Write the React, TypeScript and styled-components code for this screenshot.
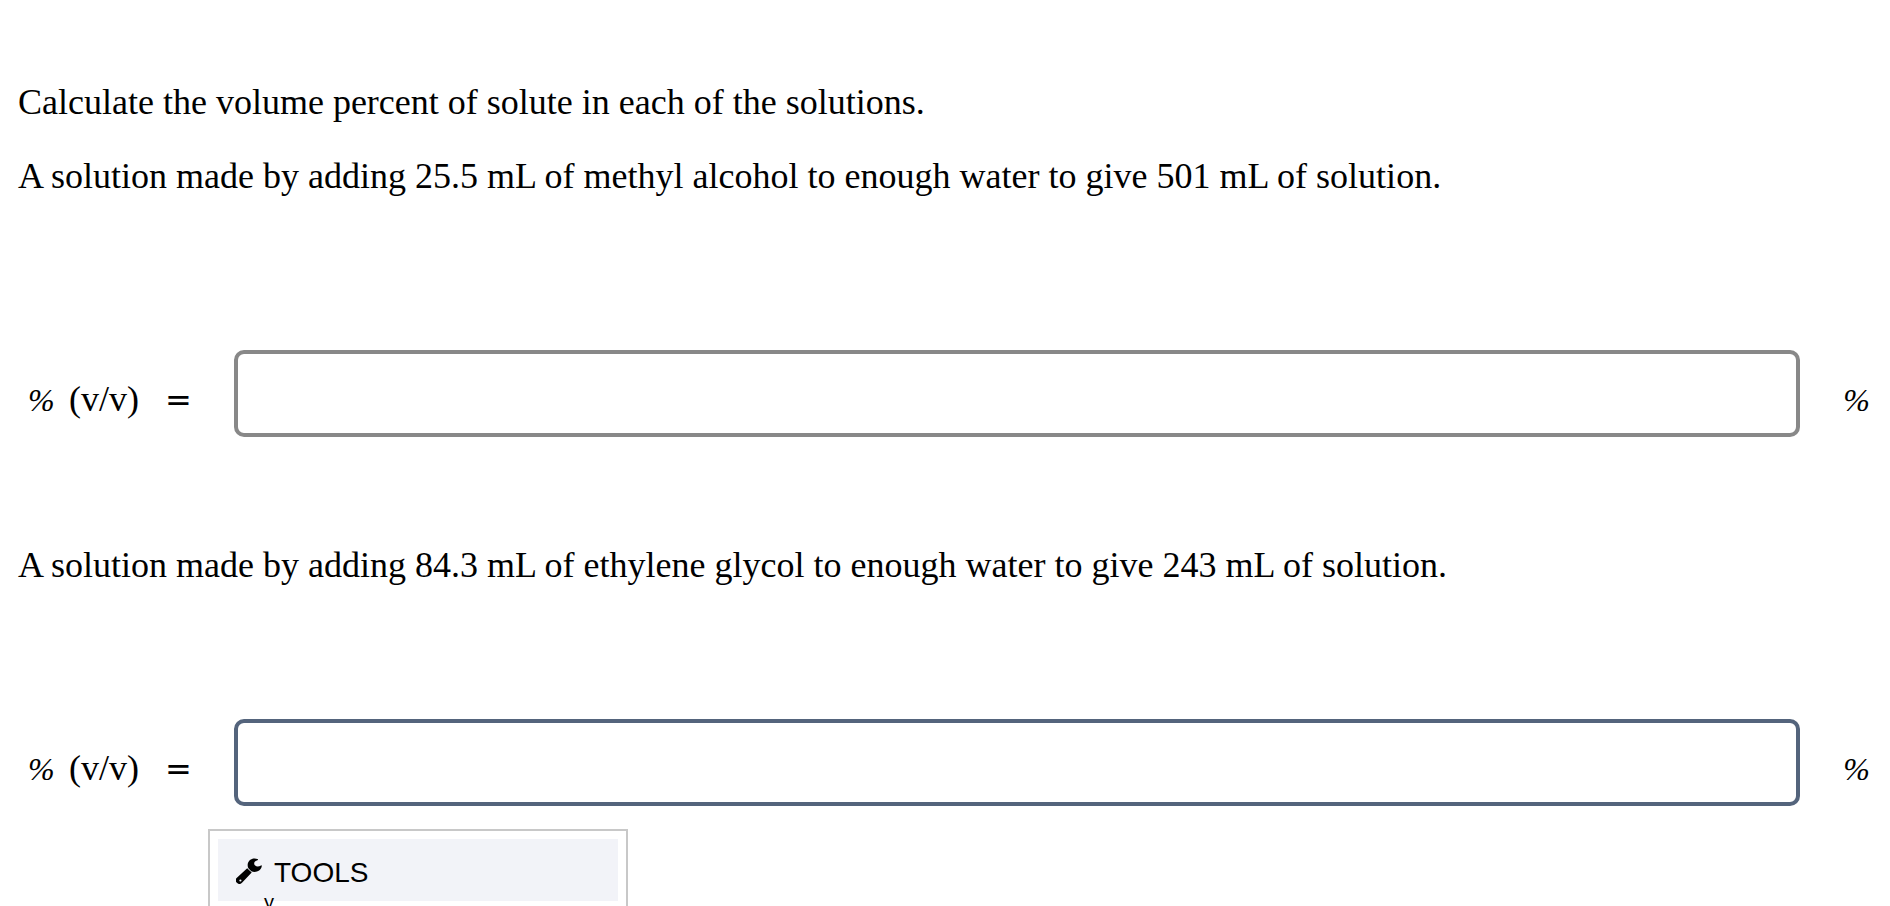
import React from "react";
import styled, { createGlobalStyle } from "styled-components";

const GlobalStyle = createGlobalStyle`
  *, *::before, *::after { box-sizing: border-box; }
  body { margin: 0; background: #fff; color: #000; }
`;

const Page = styled.main`
  height: 100vh;
  overflow: hidden;
  padding: 80px 18px 0;
  font-family: "Liberation Serif", "Times New Roman", serif;
  font-size: 36px;
  line-height: 44px;
`;

const Paragraph = styled.p`
  margin: 0 0 30px;
`;

const AnswerRow = styled.div<{ $gap: number }>`
  display: flex;
  align-items: center;
  margin: ${(p) => p.$gap}px 0 0;
  padding: 0 2px 0 10px;
`;

const AnswerLabel = styled.label`
  display: flex;
  flex: none;
  align-items: baseline;
  width: 206px;
  padding-top: 12px;
`;

const Percent = styled.span`
  width: 41px;
  font-size: 32px;
  font-style: italic;
`;

const Equals = styled.span`
  margin-left: 26px;
  font-family: "DejaVu Sans", sans-serif;
  font-size: 32px;
`;

const AnswerInput = styled.input<{ $active?: boolean }>`
  flex: 1;
  min-width: 0;
  height: 87px;
  padding: 0 20px;
  border: 4px solid ${(p) => (p.$active ? "#54647c" : "#888")};
  border-radius: 10px;
  background: #fff;
  font: inherit;
  outline: none;
`;

const Unit = styled.span`
  flex: none;
  width: 70px;
  padding-top: 12px;
  font-size: 32px;
  font-style: italic;
  text-align: right;
`;

const Prompt = styled.p`
  margin: 106px 0 0;
`;

const ToolsPanel = styled.section`
  width: 420px;
  height: 240px;
  margin: 23px 0 0 190px;
  padding: 8px;
  border: 2px solid #c8c8c8;
  background: #fff;
  font-family: "Liberation Sans", Arial, sans-serif;
`;

const ToolsButton = styled.button`
  display: flex;
  align-items: center;
  gap: 12px;
  width: 100%;
  height: 62px;
  padding: 6px 18px 0;
  border: 0;
  background: #f2f3f8;
  color: #000;
  font: inherit;
  font-size: 28px;
  line-height: 32px;

  svg {
    margin-bottom: 4px;
  }
`;

const SuperscriptButton = styled.button`
  display: block;
  margin: -11px 0 0 46px;
  padding: 0;
  border: 0;
  background: none;
  color: #000;
  font: inherit;
  font-size: 20px;
  line-height: 24px;
`;

function WrenchIcon() {
  return (
    <svg width="26" height="26" viewBox="0 0 26 26" aria-hidden="true">
      <path
        d="M22 1.300C17.500-1 12.300 1.300 11.700 6.300C11.500 8.300 12 9.600 12.800 10.800L15.300 13.200C19.500 15.200 24.800 13 25.700 8.600C25.900 7.500 25.700 7 25 7.400C23 8.700 20.800 9.100 19.200 7.600C17.600 6 18 3.900 19.700 3L22 2.100Z"
        fill="#000"
      />
      <path
        fillRule="evenodd"
        d="M11.200 10.200Q13.400 12.400 15.700 14.600L6 24.800A3.600 3.600 0 0 1 .9 19.700ZM3.300 22.500A1.100 1.100 0 1 0 5.500 22.500A1.100 1.100 0 1 0 3.300 22.500Z"
        fill="#000"
      />
    </svg>
  );
}

function Answer({ id, gap, active }: { id: string; gap: number; active?: boolean }) {
  return (
    <AnswerRow $gap={gap}>
      <AnswerLabel htmlFor={id}>
        <Percent>%</Percent>
        <span>(v/v)</span>
        <Equals>=</Equals>
      </AnswerLabel>
      <AnswerInput id={id} type="text" $active={active} />
      <Unit>%</Unit>
    </AnswerRow>
  );
}

export default function App() {
  return (
    <Page>
      <GlobalStyle />
      <Paragraph>Calculate the volume percent of solute in each of the solutions.</Paragraph>
      <Paragraph>
        A solution made by adding 25.5 mL of methyl alcohol to enough water to give 501 mL of solution.
      </Paragraph>
      <Answer id="methyl-alcohol" gap={152} />
      <Prompt>
        A solution made by adding 84.3 mL of ethylene glycol to enough water to give 243 mL of solution.
      </Prompt>
      <Answer id="ethylene-glycol" gap={132} active />
      <ToolsPanel>
        <ToolsButton type="button">
          <WrenchIcon />
          TOOLS
        </ToolsButton>
        <SuperscriptButton type="button">y</SuperscriptButton>
      </ToolsPanel>
    </Page>
  );
}
